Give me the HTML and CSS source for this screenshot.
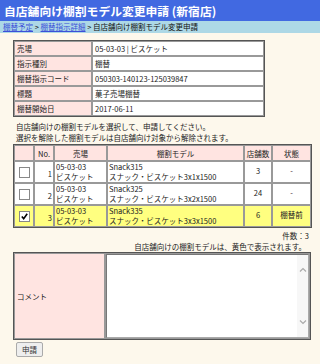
FILE: index.html
```html
<!DOCTYPE html>
<html lang="ja">
<head>
  <meta charset="UTF-8">
  <meta name="viewport" content="width=device-width, initial-scale=1.0">
  <title>自店舗向け棚割モデル変更申請</title>
  <link rel="stylesheet" href="styles.css">
</head>
<body>
  <div class="title-bar">自店舗向け棚割モデル変更申請 (新宿店)</div>
  <div class="crumbs">
    <a href="#">棚替予定</a> &gt; <a href="#">棚替指示詳細</a> &gt; 自店舗向け棚割モデル変更申請
  </div>

  <div class="content">
    <table class="info">
      <tr><th>売場</th><td>05-03-03 | ビスケット</td></tr>
      <tr><th>指示種別</th><td>棚替</td></tr>
      <tr><th>棚替指示コード</th><td>050303-140123-125039847</td></tr>
      <tr><th>標題</th><td>菓子売場棚替</td></tr>
      <tr><th>棚替開始日</th><td>2017-06-11</td></tr>
    </table>

    <p class="note">自店舗向けの棚割モデルを選択して、申請してください。<br>選択を解除した棚割モデルは自店舗向け対象から解除されます。</p>

    <table class="models">
      <colgroup>
        <col class="w-check"><col class="w-no"><col class="w-area"><col class="w-model"><col class="w-count"><col class="w-state">
      </colgroup>
      <tr class="head">
        <th></th>
        <th>No.</th>
        <th>売場</th>
        <th>棚割モデル</th>
        <th>店舗数</th>
        <th>状態</th>
      </tr>
      <tr>
        <td class="c-check"><span class="box"></span></td>
        <td class="c-no">1</td>
        <td><div class="two">05-03-03<br>ビスケット</div></td>
        <td><div class="two">Snack315<br>スナック・ビスケット3x1x1500</div></td>
        <td class="c-mid">3</td>
        <td class="c-mid">-</td>
      </tr>
      <tr>
        <td class="c-check"><span class="box"></span></td>
        <td class="c-no">2</td>
        <td><div class="two">05-03-03<br>ビスケット</div></td>
        <td><div class="two">Snack325<br>スナック・ビスケット3x2x1500</div></td>
        <td class="c-mid">24</td>
        <td class="c-mid">-</td>
      </tr>
      <tr class="mine">
        <td class="c-check"><span class="box"><svg viewBox="0 0 9 9" width="9" height="9"><path d="M1.8 4.4 L3.7 6.6 L7.2 1.8" fill="none" stroke="#000" stroke-width="1.6"/></svg></span></td>
        <td class="c-no">3</td>
        <td><div class="two">05-03-03<br>ビスケット</div></td>
        <td><div class="two">Snack335<br>スナック・ビスケット3x3x1500</div></td>
        <td class="c-mid">6</td>
        <td class="c-mid">棚替前</td>
      </tr>
    </table>

    <div class="count">件数：3</div>
    <div class="legend">自店舗向けの棚割モデルは、黄色で表示されます。</div>

    <table class="comment">
      <tr>
        <th>コメント</th>
        <td>
          <div class="memo">
            <textarea></textarea>
            <div class="scroll">
              <svg viewBox="0 0 10 10" width="10" height="10"><path d="M2 6.5 L5 3.5 L8 6.5" fill="none" stroke="#aaa" stroke-width="1.2"/></svg>
              <svg viewBox="0 0 10 10" width="10" height="10"><path d="M2 3.5 L5 6.5 L8 3.5" fill="none" stroke="#aaa" stroke-width="1.2"/></svg>
            </div>
          </div>
        </td>
      </tr>
    </table>

    <button class="apply">申請</button>
  </div>
</body>
</html>
```

FILE: styles.css
```css
body { margin: 0; background-color: #fdf8ec; font-family: "Noto Sans CJK JP", "Liberation Sans", sans-serif; font-size: 7.5px; color: #222; }
.title-bar { background-color: #4169e1; color: #fff; font-weight: bold; font-size: 11.8px; height: 21px; line-height: 21px; padding-left: 4px; }
.crumbs { background-color: #add8e6; font-size: 7.5px; height: 12px; line-height: 12px; padding-left: 3px; color: #111; }
.crumbs a { color: #3b4fd8; }
.content { padding: 7px 0 0 13px; }

table { border-collapse: separate; border-spacing: 0; border: 1px solid #555; }
th, td { border: 1px solid #999; font-weight: normal; padding: 0 2px; }
th { background-color: #ffe4e1; }

.info { width: 252px; }
.info th { width: 72px; text-align: left; height: 13px; }
.info td { background-color: #fff; }

.note { margin: 4px 0 0 3px; line-height: 11px; }

.models { width: 297px; margin-top: 1px; table-layout: fixed; }
.w-check { width: 20px; }
.w-no { width: 20px; }
.w-area { width: 53px; }
.w-model { width: 137px; }
.w-count { width: 28px; }
.w-state { width: 39px; }
.models tr.head { height: 16px; }
.models th { text-align: center; line-height: 13px; padding: 0; white-space: nowrap; }
.models td { background-color: #fff; line-height: 9px; padding: 0 1px; vertical-align: top; white-space: nowrap; overflow: hidden; }
.models .two { height: 20px; line-height: 10px; overflow: hidden; }
.models tr.mine td { background-color: #ffff80; }
.models td.c-check { text-align: center; vertical-align: middle; }
.models td.c-no { text-align: right; vertical-align: middle; padding-top: 3px; }
.models td.c-mid { text-align: center; vertical-align: middle; padding-bottom: 4px; }
.box { display: block; margin: 0 auto; width: 9px; height: 9px; border: 1px solid #888; background-color: #fff; }
.box svg { display: block; }

.count { text-align: right; width: 296px; margin-top: 2px; line-height: 11px; }
.legend { text-align: right; width: 293px; line-height: 11px; }

.comment { width: 298px; margin-top: 0; }
.comment th { width: 85px; text-align: left; vertical-align: middle; }
.comment td { padding: 0; background-color: #fff; }
.memo { position: relative; }
.comment textarea { display: block; width: 100%; height: 84px; box-sizing: border-box; margin: 0; border: 1px solid #aaa; border-top-color: #777; border-left-color: #777; overflow: hidden; resize: none; }
.scroll { position: absolute; top: 1px; right: 1px; bottom: 1px; width: 11px; background-color: #f7f7f7; display: flex; flex-direction: column; justify-content: space-between; align-items: center; padding: 10px 0; box-sizing: border-box; }
.scroll svg { display: block; }

.apply { margin: 2px 0 0 3px; font-family: inherit; font-size: 7.5px; height: 15px; padding: 0 5px; background-color: #eee; border: 1px solid #aaa; border-radius: 2px; color: #333; }
```
